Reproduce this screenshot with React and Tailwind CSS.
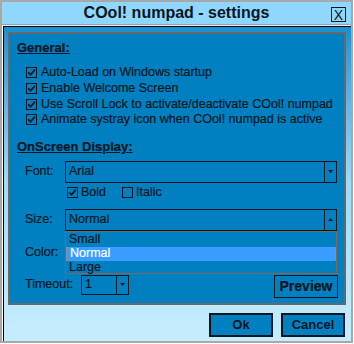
import React from 'react';

const ink = 'text-[#0b1520]';

// small square checkbox with a tick
const Check = ({ checked }) => (
  <span className="w-[11px] h-[11px] border border-[#0b1520] flex items-center justify-center shrink-0">
    {checked && (
      <svg width="9" height="9" viewBox="0 0 9 9">
        <path d="M1.2 4.4 L3.5 6.8 L7.9 1.6" fill="none" stroke="#0b1520" strokeWidth="1.7" />
      </svg>
    )}
  </span>
);

const Arrow = ({ up }) => (
  <svg width="5" height="3" viewBox="0 0 5 3">
    <path d={up ? 'M0 3 L5 3 L2.5 0 Z' : 'M0 0 L5 0 L2.5 3 Z'} fill="#0b1520" />
  </svg>
);

const Select = ({ value, up, className }) => (
  <div className={`flex border border-[#0b1520] ${className}`}>
    <div className="flex-1 pl-[3px] flex items-center">{value}</div>
    <div className="w-[12px] border-l border-[#0b1520] flex items-center justify-center">
      <Arrow up={up} />
    </div>
  </div>
);

const options = [
  'Auto-Load on Windows startup',
  'Enable Welcome Screen',
  'Use Scroll Lock to activate/deactivate COol! numpad',
  'Animate systray icon when COol! numpad is active',
];

export default function App() {
  return (
    <div className="w-[354px] h-[344px] bg-white" style={{ fontFamily: '"Liberation Sans", Arial, sans-serif' }}>
      <div className={`w-[353px] h-[343px] border-2 border-[#a8a8a8] flex flex-col ${ink}`}>
        {/* title bar */}
        <div className="h-[22px] bg-[#8fd7fd] flex items-center relative shrink-0">
          <div className="flex-1 text-center font-bold text-[16px] leading-none">COol! numpad - settings</div>
          <div className="absolute right-[5px] top-[5px] w-[15px] h-[15px] border border-[#0b1520] flex items-center justify-center text-[14px] leading-none">X</div>
        </div>
        <div className="h-[2px] border-t border-[#a0a0a0] bg-[#e0f4fc] shrink-0" />

        {/* body */}
        <div className="flex-1 ml-[1px] border-t border-l border-[#000] bg-gradient-to-b from-[#1590d0] via-[#9fdcf6] to-[#c6edfd] flex flex-col">
          <div className="mt-[5px] ml-[4px] w-[338px] h-[273px] border-2 border-[#686868] bg-[#0080c0] text-[12.5px] leading-[15px] [-webkit-text-stroke:0.2px_#0b1520]">
            <div className="mt-[6px] ml-[7px] font-bold text-[13px] underline">General:</div>
            <div className="mt-[10px] ml-[16px] flex flex-col">
              {options.map((o) => (
                <div key={o} className="h-[15.7px] flex items-center gap-[4px]">
                  <Check checked />
                  <span>{o}</span>
                </div>
              ))}
            </div>
            <div className="mt-[11px] ml-[7px] font-bold text-[13px] underline">OnScreen Display:</div>

            <div className="mt-[7px] ml-[15px] flex items-center">
              <span className="w-[40px]">Font:</span>
              <Select value="Arial" className="w-[272px] h-[22px]" />
            </div>
            <div className="mt-[3px] ml-[57px] h-[14px] flex items-center">
              <Check checked />
              <span className="ml-[3px]">Bold</span>
              <span className="ml-[16px]"><Check /></span>
              <span className="ml-[3px]">Italic</span>
            </div>

            <div className="mt-[9px] ml-[15px] flex items-center">
              <span className="w-[40px]">Size:</span>
              <div className="relative">
                <Select value="Normal" up className="w-[272px] h-[22px]" />
                <div className="absolute left-0 top-full w-[272px] h-[43px] border border-[#7c6a58] bg-[#0080c0] z-10 flex flex-col pt-[1px]">
                  <div className="h-[14px] pl-[3px] flex items-center">Small</div>
                  <div className="h-[14px] pl-[3px] flex items-center bg-[#3a9cff] text-white [-webkit-text-stroke:0.2px_#ffffff] border border-dotted border-[#e07a2a]">Normal</div>
                  <div className="h-[14px] pl-[3px] flex items-center">Large</div>
                </div>
              </div>
            </div>

            <div className="ml-[15px] h-[44px] flex items-center">
              <span>Color:</span>
            </div>

            <div className="ml-[15px] mr-[6px] flex items-start">
              <span className="w-[56px] h-[20px] flex items-center">Timeout:</span>
              <Select value="1" className="w-[48px] h-[20px]" />
              <div className="ml-auto w-[64px] h-[23px] border border-[#0b1520] flex items-center justify-center font-bold text-[14px]">Preview</div>
            </div>
          </div>

          <div className="mt-[8px] mr-[6px] flex justify-end gap-[8px]">
            <div className="w-[64px] h-[24px] border-2 border-[#0b1520] bg-[#0080c0] flex items-center justify-center font-bold text-[13px]">Ok</div>
            <div className="w-[64px] h-[24px] border-2 border-[#0b1520] bg-[#0080c0] flex items-center justify-center font-bold text-[13px]">Cancel</div>
          </div>
        </div>
      </div>
    </div>
  );
}
